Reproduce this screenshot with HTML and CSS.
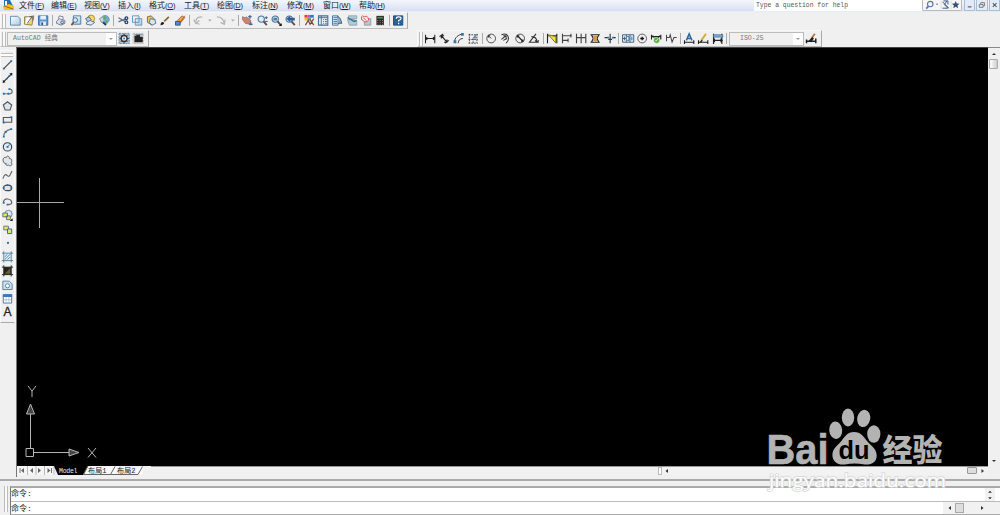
FILE: index.html
```html
<!DOCTYPE html>
<html lang="zh-CN">
<head>
<meta charset="utf-8">
<title>AutoCAD</title>
<link rel="stylesheet" href="styles.css">
</head>
<body>
<svg class="defs" aria-hidden="true">
  <defs>
    <linearGradient id="sheet" x2="1" y2="1"><stop stop-color="#fff"/><stop offset="1" stop-color="#a9c9e4"/></linearGradient>
    <g id="dimbar" fill="none" stroke="#222" stroke-width="1.1"><path d="M2 3v9M12 3v9M2 7h10M4 5.5 2 7l2 1.500M10 5.500 12 7l-2 1.500"/></g>
    <g id="lens"><circle cx="6" cy="5.500" r="3.400" fill="#dcecf8" stroke="#49759f" stroke-width="1.200"/><path d="m8.500 8 3.500 4" stroke="#654b45" stroke-width="2"/></g>
  </defs>
</svg>
<div class="app">
  <header class="menubar">
    <svg class="logo" viewBox="0 0 12 12"><path d="M1 0h6l3 6H1z" fill="#286dab"/><path d="M2 1h2v5H2z" fill="#fff"/><path d="m0 6 6-2 5 2v4H1z" fill="#f1bd24"/><path d="m1 6 9 3" stroke="#8e7425"/></svg>
    <nav class="menus">
      <span>文件<small>(<u>F</u>)</small></span><span>编辑<small>(<u>E</u>)</small></span><span>视图<small>(<u>V</u>)</small></span><span>插入<small>(<u>I</u>)</small></span><span>格式<small>(<u>O</u>)</small></span><span>工具<small>(<u>T</u>)</small></span><span>绘图<small>(<u>D</u>)</small></span><span>标注<small>(<u>N</u>)</small></span><span>修改<small>(<u>M</u>)</small></span><span>窗口<small>(<u>W</u>)</small></span><span>帮助<small>(<u>H</u>)</small></span>
    </nav>
    <div class="question">Type a question for help</div>
    <div class="info">
      <svg viewBox="0 0 40 11"><g fill="none" stroke="#5973a0" stroke-width="1.200"><circle cx="6.500" cy="4.500" r="3"/><path d="M4.500 7 2 9.500" stroke-width="1.800"/></g><path d="M12.500 4h3L14 5.500z" fill="#555"/><path d="M18.500 1v9M29.500 1v9" stroke="#ccc" stroke-width=".6"/><path d="m20 2 7 7M25 1l-3 4 4 4h-6M21 1h5v4" fill="none" stroke="#405b8b" stroke-width="1.100"/><path d="m34.500 1 1.200 2.800 3 .2-2.300 2 .8 3-2.700-1.600L31.800 9l.8-3-2.300-2 3-.2z" fill="#364e7b"/></svg>
    </div>
    <div class="winbtns">
      <span><svg viewBox="0 0 10 10"><path d="M3 7h4" stroke="#555" stroke-width="1.200"/></svg></span>
      <span><svg viewBox="0 0 10 10"><path d="M4 4V2.500h4V6H6.500M2.500 4.500h4v3h-4z" fill="none" stroke="#777"/></svg></span>
      <span><svg viewBox="0 0 10 10"><path d="m3 3 4 4M7 3 3 7" stroke="#555" stroke-width="1.100"/></svg></span>
    </div>
  </header>

  <div class="row">
    <div class="toolbar standard">
      <i class="grip"></i>
      <svg viewBox="0 0 14 14"><path d="M2 2.500h7.500l3 2.500v7H2z" fill="url(#sheet)" stroke="#6087a6"/></svg>
      <svg viewBox="0 0 14 14"><path d="M2 3h5l5-1-2 10-8-1z" fill="#f5cf59" stroke="#8e8552"/><path d="m4 4 5-1-1 5-5 3z" fill="#fff"/><path d="m5 10 5-7m-3 0h4v4" fill="none" stroke="#426073"/></svg>
      <svg viewBox="0 0 14 14"><path d="M2 2h10v10H2z" fill="#6197cd" stroke="#3d6ba1"/><path d="M4 2h6v4H4zM4 8h6v4H4z" fill="#e7f0f8"/><path d="M5 9h2v3H5z" fill="#375980"/></svg>
      <b class="sep"></b>
      <svg viewBox="0 0 14 14"><path d="m4 5 1-3 4 1v3" fill="#fff" stroke="#6a7794"/><path d="m2 8 3-3 6 2v3l-4 2-5-2z" fill="#d9dfea" stroke="#6a7794"/><circle cx="8" cy="9" r="1.500" fill="none" stroke="#546382"/></svg>
      <svg viewBox="0 0 14 14"><path d="M4 2h8v9H4z" fill="url(#sheet)" stroke="#51779a"/><circle cx="6" cy="6.500" r="2.500" fill="#d9edf8" stroke="#3c6b98"/><path d="m4 9-2 3" stroke="#865538" stroke-width="2"/></svg>
      <svg viewBox="0 0 14 14"><circle cx="8" cy="5" r="3.800" fill="#ffdc59" stroke="#a08a45"/><path d="m2 5 4-2 2 3-3 3z" fill="#b6cfe6" stroke="#48688d"/><path d="m3 9 4-2 5 2-4 3-5-1z" fill="#e0e9ef" stroke="#57718b"/></svg>
      <svg viewBox="0 0 14 14"><circle cx="8" cy="6" r="4.500" fill="#6faad8" stroke="#7d98b0"/><path d="m7 2 3 2-3 2zM9 6l2 3-3 1z" fill="#65a855"/><path d="m2 5 4-2 1 5-3 1z" fill="#d5d7da" stroke="#8797a5"/><path d="m6 9 3 3" stroke="#263a4b" stroke-width="2"/></svg>
      <b class="sep"></b>
      <svg viewBox="0 0 14 14"><path d="m2 4 8 4.500M2 8.500 10 5" stroke="#61717d" stroke-width="1.300"/><g fill="none" stroke="#243f70" stroke-width="1.300"><circle cx="10.500" cy="4.500" r="1.500"/><circle cx="10.500" cy="9" r="1.500"/></g></svg>
      <svg viewBox="0 0 14 14"><path d="M2 2h7v7H2zM5 5h7v7H5z" fill="url(#sheet)" stroke="#6b91b6"/></svg>
      <svg viewBox="0 0 14 14"><path d="m3 3 4-1 4 4-3 6-5-3z" fill="#e5c76a" stroke="#816c3d"/><path d="m6 5 5 1 1 4-4 2-3-3z" fill="#d7e7f1" stroke="#53758d"/></svg>
      <svg viewBox="0 0 14 14"><path d="m6 8 5-5" stroke="#8b6536" stroke-width="1.800"/><path d="M2 12c0-4 3-4 4-2-1 2-2 2-4 2z" fill="#222"/></svg>
      <svg viewBox="0 0 14 14"><path d="m4 7 5-5 3 2-5 6z" fill="#ffa33f" stroke="#a9714e"/><path d="M2 8h5v4H2z" fill="#5989c6" stroke="#3a4f75"/><path d="m7 9 5-7" stroke="#b35b31"/></svg>
      <b class="sep"></b>
      <svg class="undo" viewBox="0 0 14 14"><path d="M4 8c1-5 4-5 7-5M2 6l2 4 4-3M4 9c1 1 2 2 4 2" fill="none" stroke="#b4b4b4" stroke-width="1.400"/></svg>
      <svg class="drop" viewBox="0 0 8 14"><path d="M2 6h4L4 8z" fill="#aaa"/></svg>
      <svg class="undo" viewBox="0 0 14 14"><path d="M2 3c5 0 7 2 8 7M6 9l4 2 1-5" fill="none" stroke="#b4b4b4" stroke-width="1.400"/></svg>
      <svg class="drop" viewBox="0 0 8 14"><path d="M2 6h4L4 8z" fill="#aaa"/></svg>
      <b class="sep"></b>
      <svg viewBox="0 0 14 14"><path d="m2 3 3 1 1-1 5 4-1 4-5-1-3-4z" fill="#c78378" stroke="#ad736b"/><path d="M10 5V1M8 3h4M11 9v3M9 11h4" stroke="#315c87" stroke-width="1.200"/></svg>
      <svg viewBox="0 0 14 14"><use href="#lens"/><path d="M10 4h3m-1.500-1.500v3M10 8h3" stroke="#315b80"/></svg>
      <svg viewBox="0 0 14 14"><use href="#lens"/><path d="M4 4h4v3H4z" fill="#557da0"/><path d="M13 10v3h-3z" fill="#111"/></svg>
      <svg viewBox="0 0 14 14"><use href="#lens"/><path d="m3 5 4-3v2h5v3H7v2z" fill="#315b90"/></svg>
      <b class="sep"></b>
      <svg viewBox="0 0 14 14"><path d="M2 1h3v3H2z" fill="#db3c45"/><path d="M5 1h3v3H5z" fill="#ec3dce"/><path d="M8 1h4v3H8z" fill="#2876e3"/><path d="M2 4h3v3H2z" fill="#f6bc33"/><path d="M5 4h4v3H5z" fill="#59b04f"/><path d="m3 12 3-5 2 4 4-6M8 6l4 6" fill="none" stroke="#7e4548" stroke-width="1.300"/></svg>
      <svg viewBox="0 0 14 14"><path d="M2 2h10v10H2z" fill="#e7f0f8" stroke="#476d95" stroke-width="1.200"/><path d="M5 2v10M2 4h10M7 6h1M9 6h2M7 8h1M9 8h2M7 10h1M9 10h2" stroke="#476d95"/></svg>
      <svg viewBox="0 0 14 14"><path d="M2 2h6v10H2z" fill="#dfebf4" stroke="#4c7090"/><path d="M3 4h4M3 6h4M3 8h4M3 10h4" stroke="#4c7090"/><path d="M7 3c3 0 4 3 5 7H8" fill="#8babc8" stroke="#315878"/></svg>
      <svg viewBox="0 0 14 14"><path d="M3 2h9v3H3zM2 6h7l3 2v4H4z" fill="#b5cad8" stroke="#8fa4b0"/><path d="m2 4 7 4 3-1" fill="none" stroke="#3c789d" stroke-width="1.500"/></svg>
      <svg viewBox="0 0 14 14"><path d="M5 5h7v7H5z" fill="#bbc7cf" stroke="#929ea6"/><path d="M2 3q1-2 3 0 3-2 4 1 2 3-1 4-3 2-4-1-3 0-2-4z" fill="#ffe8e8" stroke="#df4652"/><path d="m4 4 3 3" stroke="#ce4853"/></svg>
      <svg viewBox="0 0 14 14"><path d="M3 2h8v10H3z" fill="#252525"/><path d="M4 3h6v2H4z" fill="#528559"/><path d="M4 7h6M4 9h6M4 11h6" stroke="#d8b3b3" stroke-width=".8" stroke-dasharray="1 1.500"/></svg>
      <b class="sep"></b>
      <svg viewBox="0 0 14 14"><path d="M2 2h10v10H2z" fill="#286398" stroke="#1d4f80"/><path d="M5 5q0-2 2.500-2 3 0 2.500 2 0 1-2.500 2v1M7.500 9.500v1.500" fill="none" stroke="#fff" stroke-width="1.300"/></svg>
    </div>
  </div>

  <div class="row second">
    <div class="toolbar workspace">
      <i class="grip"></i>
      <div class="combo"><span>AutoCAD 经典</span><em></em></div>
      <svg viewBox="0 0 14 14"><path d="M1.500 1.500h11v11h-11z" fill="#abc5db" stroke="#66839d" stroke-dasharray="2 1"/><circle cx="7" cy="7" r="3.200" fill="#eee" stroke="#333" stroke-width="1.500"/><path d="M7 2v2M7 10v2M2 7h2M10 7h2M3.500 3.500l1 1M9.500 9.500l1 1M10.500 3.500l-1 1M4.500 9.500l-1 1" stroke="#333"/><circle cx="7" cy="7" r="1" fill="#397bb2"/></svg>
      <svg viewBox="0 0 14 14"><path d="M1.500 1.500h11v11h-11z" fill="#ddd" stroke="#bbb" stroke-dasharray="2 1"/><path d="M3 4h2V3h4v2h3v6H3z" fill="#202020"/><path d="M3 3h9" stroke="#547692"/></svg>
    </div>
    <div class="toolbar dimension">
      <i class="grip"></i>
      <svg viewBox="0 0 14 14"><use href="#dimbar"/></svg>
      <svg viewBox="0 0 14 14"><path d="m2 5 4-3M8 12l4-3M4 4l6 7M4 7V4h3M7 11h3V8" fill="none" stroke="#222" stroke-width="1.200"/></svg>
      <svg viewBox="0 0 14 14"><path d="M2 11c0-5 4-8 9-9M6 12c0-3 2-5 5-5" fill="none" stroke="#333"/><path d="M1 9h3v3H1zM9 1h3v3H9z" fill="#3975a6"/></svg>
      <svg viewBox="0 0 14 14"><path d="M2 3h10M2 8h10M2 12h10M3 2v10M7 7v5M11 2v10" stroke="#444" stroke-dasharray="2 1"/><path d="m6 7 4-5v5z" fill="#5f8fb8"/></svg>
      <b class="sep"></b>
      <svg viewBox="0 0 14 14"><circle cx="7" cy="7" r="4.700" fill="none" stroke="#444"/><path d="M7 7 4 4m0 2V4h2" fill="none" stroke="#222"/></svg>
      <svg viewBox="0 0 14 14"><path d="M3 3c7-3 10 4 5 9M3 8l5-4M8 4v3M8 4H5M5 9l4-2" fill="none" stroke="#333" stroke-width="1.100"/></svg>
      <svg viewBox="0 0 14 14"><circle cx="7" cy="7" r="4.700" fill="none" stroke="#444"/><path d="m3.500 3.500 7 7M4 6V4h2M8 10h2V8" fill="none" stroke="#222" stroke-width="1.200"/></svg>
      <svg viewBox="0 0 14 14"><path d="M12 11H2l7-9M4 5c4 0 6 2 6 6M8 9l2 2 2-2" fill="none" stroke="#333" stroke-width="1.200"/></svg>
      <b class="sep"></b>
      <svg viewBox="0 0 14 14"><path d="M2 2v10M12 2v10M2 4h10" stroke="#222" stroke-width="1.200"/><path d="m3 3 8 2v7z" fill="#f4e52d" stroke="#77712e"/></svg>
      <svg viewBox="0 0 14 14"><path d="M2 2v10M2 4h10M2 9h6M8 7v4M11 2v4" fill="none" stroke="#444" stroke-width="1.200"/></svg>
      <svg viewBox="0 0 14 14"><path d="M2 2v10M7 2v10M12 2v10M2 6h10" stroke="#444" stroke-width="1.200"/></svg>
      <svg viewBox="0 0 14 14"><path d="M2 3h10M2 11h10M3 3l2 4-2 4M11 3 9 7l2 4" fill="none" stroke="#222" stroke-width="1.200"/><path d="M5 4h4v6H5z" fill="#d39a4c"/></svg>
      <svg viewBox="0 0 14 14"><path d="M1 6h4M9 6h4M7 2v10M5 8h4" stroke="#333" stroke-width="1.200"/><path d="M4 5h2v2H4zM9 5h2v2H9z" fill="#427da9"/></svg>
      <b class="sep"></b>
      <svg viewBox="0 0 14 14"><path d="M1 3h12v8H1z" fill="#eaf4fc" stroke="#315c83"/><path d="M5 3v8M9 3v8M1.500 7h3M3 5v4M6 5h2v4H6M11 5v4" fill="none" stroke="#315c83"/></svg>
      <svg viewBox="0 0 14 14"><circle cx="7" cy="7" r="4.700" fill="none" stroke="#555"/><path d="M5 7h4M7 5v4" stroke="#111" stroke-width="1.400"/></svg>
      <svg viewBox="0 0 14 14"><path d="M2 3v5M12 3v5M2 5h10M3 4l2 2M11 4 9 6" stroke="#222" stroke-width="1.200"/><circle cx="7.500" cy="9" r="3" fill="#58b043"/><path d="m6 9 1 1 2-3" fill="none" stroke="#d6efce"/></svg>
      <svg viewBox="0 0 14 14"><path d="M2 3v7M2 6h3l1-3 2 8 2-5h3" fill="none" stroke="#444" stroke-width="1.100"/></svg>
      <b class="sep"></b>
      <svg viewBox="0 0 14 14"><path d="M2 9v4M12 9v4M2 11h10" stroke="#222" stroke-width="1.200"/><path d="m4 9 3-7 3 7M5 7h4" fill="none" stroke="#28669b" stroke-width="1.600"/></svg>
      <svg viewBox="0 0 14 14"><path d="M2 9v4M12 9v4M2 11h10" stroke="#222" stroke-width="1.200"/><path d="m5 9 5-7" stroke="#dfa92f" stroke-width="2"/><path d="m4 11 2-2" stroke="#222" stroke-width="1.500"/></svg>
      <svg viewBox="0 0 14 14"><path d="M2 2v11M11 2v11M2 9h10M3 7v4M10 7v4" stroke="#222" stroke-width="1.200"/><path d="M2 3h10v2.500H2z" fill="#82b3da" stroke="#356a94" stroke-width=".8"/></svg>
      <b class="sep"></b>
      <div class="combo"><span>ISO-25</span><em></em></div>
      <svg class="style" viewBox="0 0 14 14"><path d="M2 8v4M12 7v5M2 10h10" stroke="#222" stroke-width="1.600"/><path d="m8 6 3-4" stroke="#c0713b" stroke-width="1.800"/><path d="m4 10 4-5 2 2-3 4z" fill="#222"/></svg>
    </div>
  </div>

  <main class="work">
    <aside class="side">
      <div class="draw">
        <i class="hgrip"></i>
        <svg viewBox="0 0 14 14"><path d="m3 11 8-8" stroke="#444" stroke-width="1.200"/><path d="M2 10h2v2H2zM10 2h2v2h-2z" fill="#2471b1"/></svg>
        <svg viewBox="0 0 14 14"><path d="M2 12 12 2" stroke="#333" stroke-width="1.200"/><path d="m2 9 3 3H2zM12 5 9 2h3z" fill="#222"/><circle cx="6" cy="8" r="1" fill="#2471b1"/><circle cx="9" cy="5" r="1" fill="#2471b1"/></svg>
        <svg viewBox="0 0 14 14"><path d="M3 9h6c4 0 4-5 0-5" fill="none" stroke="#777" stroke-width="1.300"/><path d="M2 8h2v2H2zM7 8h2v2H7zM8 3h2v2H8z" fill="#2471b1"/></svg>
        <svg viewBox="0 0 14 14"><path d="m7 2.500 4.500 3.500-1.700 5.500H4.500L2.500 6z" fill="#dbe6ee" stroke="#555" stroke-width="1.200"/></svg>
        <svg viewBox="0 0 14 14"><path d="M2.500 4.500h9v5h-9z" fill="#e8edf1" stroke="#555" stroke-width="1.200"/><path d="M2 9h2v2H2zM10 3h2v2h-2z" fill="#2471b1"/></svg>
        <svg viewBox="0 0 14 14"><path d="M3 11c0-4 3-7 8-8" fill="none" stroke="#777" stroke-width="1.200"/><path d="M2 10h2v2H2zM4 5h2v2H4zM10 2h2v2h-2z" fill="#2471b1"/></svg>
        <svg viewBox="0 0 14 14"><circle cx="7" cy="7" r="4.500" fill="#e2eaf0" stroke="#345" stroke-width="1.200"/><path d="m7 7 3-3" stroke="#2471b1"/><path d="M6 6h2v2H6z" fill="#2471b1"/></svg>
        <svg viewBox="0 0 14 14"><path d="M3 8.500C1 6 3 2 5.500 3.500c1-3 4-1 3.500 1 3 0 3 3 2 4 2 3-1 5-3 3-2 1-3 0-2.500-2-1 1-2 0-2.500-1z" fill="#dce8f0" stroke="#555"/></svg>
        <svg viewBox="0 0 14 14"><path d="M2 11c2-5 3-5 5-3 3 2 3-3 5-5" fill="none" stroke="#666" stroke-width="1.200"/></svg>
        <svg viewBox="0 0 14 14"><ellipse cx="7" cy="7" rx="4.500" ry="3" fill="#dce8f0" stroke="#444" stroke-width="1.200"/><path d="M6 3h2v2H6zM2 6h2v2H2zM10 6h2v2h-2z" fill="#2471b1"/></svg>
        <svg viewBox="0 0 14 14"><path d="M2.500 8c0-6 9-5 9 0 0 2-2 2-4 2" fill="none" stroke="#666" stroke-width="1.300"/><path d="M2 7h2v2H2zM6 9h2v2H6z" fill="#2471b1"/></svg>
        <svg viewBox="0 0 14 14"><circle cx="8" cy="5" r="4" fill="#dae8f2" stroke="#5e86a5"/><path d="M2 4h5v4H2zM6 7h4v4H6z" fill="#f0e54a" stroke="#4e6f86"/><path d="M12.500 9.500v3h-3z" fill="#111"/></svg>
        <svg viewBox="0 0 14 14"><path d="M3 3h5v4H3z" fill="#f0e54a" stroke="#62768a"/><path d="M7 6h4.500v5H7z" fill="#e7df76" stroke="#36658c"/></svg>
        <svg viewBox="0 0 14 14"><circle cx="7.500" cy="7" r="1.200" fill="#2471b1"/></svg>
        <svg viewBox="0 0 14 14"><path d="M3 3h8v8H3z" fill="#e3eff7"/><path d="M1 3h12M1 11h12M3 1v12M11 1v12M4 10l6-6M4 7l3-3M7 10l3-3" stroke="#45779c" stroke-width=".9"/></svg>
        <svg viewBox="0 0 14 14"><path d="M3 3h8v8H3z" fill="#222"/><path d="M1 3h12M1 11h12M3 1v12M11 1v12" stroke="#222"/><path d="m4 10 6-6v6z" fill="#65642f"/></svg>
        <svg viewBox="0 0 14 14"><path d="M2 3h7l3 3v6H2z" fill="#cfe2ef" stroke="#5084a9"/><circle cx="7" cy="8" r="2.200" fill="#fff" stroke="#5084a9"/></svg>
        <svg viewBox="0 0 14 14"><path d="M2.500 2.500h9v9h-9z" fill="#fff" stroke="#3d79b0"/><path d="M2 2h10v3H2z" fill="#3d79b0"/><path d="M3 8h8M5.500 5v6M8.500 5v6" stroke="#9bb9d3" stroke-width=".8"/></svg>
        <span class="mtext">A</span>
      </div>
    </aside>
    <section class="view">
      <div class="canvas">
        <svg class="marks" viewBox="0 0 100 418"><path d="M0 154.500h47M22.500 130v50" stroke="#a8a8a8"/><g fill="none" stroke="#b5b5b5"><path d="M9 400.500h7.500v8H9zM13.500 400v-34M17 404.500h35"/><path d="m13.500 356-4 10h8zM62 404.500l-10-3.500v7z" fill="#444"/><path d="m11 338 4 5 4-5M15 343v6M71 400l8 9.500M79 400l-8 9.500"/></g></svg>
      </div>
      <div class="tabs">
        <div class="nav"><svg viewBox="0 0 38 9"><path d="M10.500 0v9M19 0v9M27.500 0v9M37 0v9" stroke="#bbb"/><path d="M3 2v5M34.500 2v5" stroke="#777"/><path d="M7 2v5L4 4.500zM16 2v5l-3-2.500zM21 2v5l3-2.500zM30.500 2v5l3-2.500z" fill="#666"/></svg></div>
        <svg class="tabshape" viewBox="0 0 96 9"><path d="M28.500 0 32 8.500h28L64 .5M64 8.500h24L88 .5" fill="#fafafa"/><path d="M-1 0h34l-5 9H3z" fill="#000"/><path d="m33 0-4.500 8.500h27L60 .5m-4.500 8H83L87.500.5" fill="none" stroke="#666"/><text x="4" y="7" class="model" textLength="18.500">Model</text><text x="33" y="7.300" textLength="18.500">布局1</text><text x="62" y="7.300" textLength="18.500">布局2</text></svg>
        <div class="track"></div>
        <div class="hscroll"><i class="split"></i><svg viewBox="0 0 5 9"><path d="M4 2v4L1.500 4z" fill="#333"/></svg><b></b><svg viewBox="0 0 5 9"><path d="M1.500 2v4L4 4z" fill="#333"/></svg></div>
      </div>
    </section>
    <div class="vscroll"><svg viewBox="0 0 10 10"><path d="M3 6h4L5 4z" fill="#333"/></svg><b></b><svg class="down" viewBox="0 0 10 10"><path d="M3 4h4L5 6z" fill="#333"/></svg></div>
  </main>

  <footer class="command">
    <i class="grip"></i>
    <div class="lines">
      <div class="history"><span>命令:</span><svg viewBox="0 0 10 14"><path d="M3 5h4L5 3zM3 10h4l-2 2z" fill="#333"/></svg></div>
      <div class="prompt"><span>命令:</span><div class="cmdscroll"><svg viewBox="0 0 6 10"><path d="M4 3v4L1.500 5z" fill="#333"/></svg><b></b><svg viewBox="0 0 6 10"><path d="M2 3v4l2.500-2z" fill="#333"/></svg></div></div>
    </div>
  </footer>
</div>

<svg class="watermark" viewBox="0 0 190 90">
  <g fill="#b3b3b3"><ellipse cx="74.700" cy="25.200" rx="6.500" ry="8.700" transform="rotate(-5 75 25)"/><ellipse cx="87" cy="12.500" rx="6.200" ry="9"/><ellipse cx="102.800" cy="13.500" rx="6.500" ry="8.700" transform="rotate(12 103 13)"/><ellipse cx="112.800" cy="29" rx="6.600" ry="8.700"/><path d="M93 27c7 0 10 5 13 9 4 5 9 7 9.700 14 .3 7-5 10-12 9.500-7-1.300-13-1.300-20 0-7 .7-12.300-3-12.300-9.500.3-7 5-9 9-14 3-4 6-9 12.600-9z"/>
  <text class="bai" x="5.500" y="59" textLength="62" lengthAdjust="spacingAndGlyphs">Bai</text><text class="cn" x="121.500" y="56.300" textLength="60" lengthAdjust="spacingAndGlyphs">经验</text></g>
  <text class="du" x="77.500" y="54.200" textLength="31" lengthAdjust="spacingAndGlyphs">du</text>
  <text class="url" x="8" y="82" textLength="177" lengthAdjust="spacingAndGlyphs">jingyan.baidu.com</text>
</svg>
</body>
</html>
```

FILE: styles.css
```css
* { box-sizing: border-box; }
body { margin: 0; background: #f0f0f0; font-family: "Liberation Sans", "Noto Sans CJK SC", sans-serif; color: #222; }
svg { display: block; flex: none; }
.defs { position: absolute; width: 0; height: 0; }
.app { width: 1000px; height: 515px; overflow: hidden; display: flex; flex-direction: column; }

.menubar { height: 12px; flex: none; display: flex; background: linear-gradient(#f3f6fc, #d9e0f3); border-bottom: 1px solid #e7ebf6; }
.logo { width: 12px; height: 12px; margin-left: 3px; }
.menus { width: 739px; padding-left: 4px; display: grid; grid-template-columns: 32px 33px 34px 31px 35px 33px 35px 35px 36px 36px 40px; font-size: 8px; line-height: 11px; white-space: nowrap; }
.menus small { font-size: 7.500px; letter-spacing: -.2px; }
.menus u { text-underline-offset: 1px; text-decoration-thickness: 1px; }
.question { width: 168px; flex: none; background: #fff; padding-left: 2px; font: 6.4px/11px "Liberation Mono", monospace; color: #555; white-space: pre; }
.info { width: 40px; flex: none; height: 11px; background: #f6f6f6; border: solid #b9b9b9; border-width: 0 1px 1px; border-radius: 0 0 2px 2px; }
.info svg { width: 39px; height: 10px; }
.winbtns { display: flex; gap: 1px; padding-left: 2px; }
.winbtns span { width: 11.300px; height: 11px; background: #e1ecf8; border: 1px solid #a9bdd3; border-top: 0; }
.winbtns svg { width: 9.300px; height: 10px; }

.row { height: 17px; flex: none; display: flex; }
.second { height: 18px; padding-top: 1px; }
.toolbar { height: 17px; display: flex; align-items: center; border: 1px solid #f8f8f8; border-right-color: #a9a9a9; border-bottom-color: #bdbdbd; }
.toolbar svg { width: 14.300px; height: 13px; }
.toolbar .undo { width: 15px; }
.toolbar .drop { width: 7.700px; }
.toolbar svg, .draw svg { position: relative; }
.grip { width: 4px; height: 14px; flex: none; border: solid #bbb; border-width: 0 1px; background: #fafafa; }
.sep { width: 1px; height: 11px; margin: 0 1.500px; flex: none; background: #aaa; }
.standard { width: 408px; }
.standard .grip { margin: 0 1.500px 0 1px; }
.workspace { width: 149px; }
.workspace .grip { margin: 0 1px; }
.dimension { width: 405px; margin-left: 268px; }
.dimension .grip { margin: 0 .5px; }
.combo { height: 14px; display: flex; justify-content: space-between; border: 1px solid #bbb; background: #f0f0f0; color: #777; font: 6.600px/12px "Liberation Mono", "Noto Sans CJK SC", monospace; }
.combo span { white-space: pre; }
.combo em { width: 10px; background: #fff; display: flex; align-items: center; justify-content: center; }
.combo em::after { content: ""; border: 2px solid transparent; border-top-color: #999; border-bottom: 0; }
.workspace .combo { width: 110px; padding-left: 5px; }
.dimension .combo { width: 75px; padding-left: 10px; }
.dimension .style { margin-left: .5px; }

.work { height: 430px; flex: none; display: flex; }
.side { width: 16px; padding-top: 3px; background: #f0f0f0; }
.draw { width: 15px; height: 273px; padding-top: 2px; border: 1px solid #f9f9f9; border-bottom-color: #aaa; }
.hgrip { display: block; width: 12px; height: 4px; margin-bottom: .500px; border: solid #bbb; border-width: 1px 0; background: #fff; }
.draw svg { width: 13px; height: 13.770px; }
.mtext { display: block; width: 13px; text-align: center; font-size: 12px; line-height: 14px; -webkit-text-stroke: .3px #222; }
.view { width: 972px; border-left: 1px solid #777; border-top: 1px solid #444; display: flex; flex-direction: column; }
.canvas { height: 418px; flex: none; background: #000; overflow: hidden; }
.marks { width: 100px; height: 418px; }
.tabs { height: 9px; display: flex; }
.nav { width: 38px; background: #f5f5f5; }
.nav svg { width: 38px; height: 9px; }
.tabshape { width: 96px; height: 9px; font: 7px "Liberation Mono", "Noto Sans CJK SC", monospace; overflow: visible; }
.tabshape text { fill: #222; }
.tabshape .model { fill: #eee; font-size: 6.500px; }
.track { width: 507px; border-top: 1px solid #999; }
.hscroll { display: flex; flex: 1; border-top: 1px solid #999; background: #f2f2f2; }
.hscroll svg { width: 5px; height: 9px; }
.split { width: 4px; height: 8px; background: #fff; border: 1px solid #bbb; margin-right: 2px; }
.hscroll b { width: 10px; height: 7px; margin: 0 3px 0 298px; border: 1px solid #999; border-radius: 1px; background: #ddd; }
.vscroll { width: 12px; padding: 1px 1px 0; border-top: 1px solid #888; display: flex; flex-direction: column; }
.vscroll svg { width: 10px; height: 10px; }
.vscroll b { width: 9px; height: 10px; border: 1px solid #aaa; border-radius: 1px; background: linear-gradient(90deg, #fff, #ccc); }
.vscroll .down { margin-top: 387px; }

.command { flex: 1; margin-top: 2px; border-top: 2px solid #aaa; padding-top: 5px; display: flex; background: #f0f0f0; }
.command .grip { margin: 0 2px 0 4px; height: 26px; }
.lines { flex: 1; border-top: 2px solid #aaa; border-left: 1px solid #777; border-bottom: 1px solid #aaa; font: 8px/11px "Liberation Mono", "Noto Sans CJK SC", monospace; }
.lines span { white-space: pre; }
.history { height: 14px; display: flex; justify-content: space-between; background: #fff; border-bottom: 1px solid #bbb; }
.history svg { width: 10px; height: 13px; margin-right: 5px; background: #f2f2f2; }
.prompt { height: 12px; display: flex; justify-content: space-between; background: #fff; line-height: 13px; }
.cmdscroll { width: 57px; display: flex; align-items: center; padding-left: 4px; background: #f1f1f1; }
.cmdscroll svg { width: 6px; height: 10px; }
.cmdscroll b { width: 9px; height: 10px; margin: 0 15px 0 2px; border: 1px solid #aaa; background: #ddd; }

.watermark { position: absolute; left: 761px; top: 405px; width: 190px; height: 90px; }
.bai { font: bold 42px "Liberation Sans", sans-serif; stroke: #b3b3b3; stroke-width: .6px; }
.cn { font: 900 31px "Noto Sans CJK SC", sans-serif; }
.du { font: bold 26px "Liberation Sans", sans-serif; fill: #000; }
.url { font: 19px "Open Sans", sans-serif; fill: #fff; stroke: #d6d6d6; stroke-width: 1.500px; paint-order: stroke; }
```
